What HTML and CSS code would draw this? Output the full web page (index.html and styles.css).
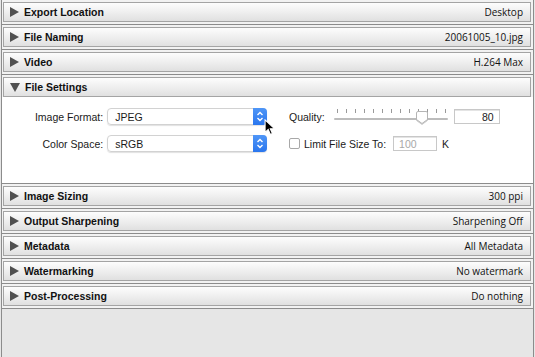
FILE: index.html
```html
<!DOCTYPE html>
<html lang="en">
<head>
    <meta charset="UTF-8">
    <title>Export</title>
    <link rel="stylesheet" href="styles.css">
</head>
<body>
    <div class="panel">
        <div class="section">
            <div class="head"><span class="tri"></span><b>Export Location</b><span class="val">Desktop</span></div>
        </div>
        <div class="section">
            <div class="head"><span class="tri"></span><b>File Naming</b><span class="val">20061005_10.jpg</span></div>
        </div>
        <div class="section">
            <div class="head"><span class="tri"></span><b>Video</b><span class="val">H.264 Max</span></div>
        </div>
        <div class="section">
            <div class="head"><span class="tri open"></span><b>File Settings</b><span class="val"></span></div>
            <div class="body">
                <div class="col left">
                    <div class="row">
                        <label class="lbl">Image Format:</label>
                        <div class="select"><span>JPEG</span><i class="step"><svg width="8" height="11" viewBox="0 0 8 11"><path d="M1.5 4L4 1.5L6.5 4M1.5 7L4 9.5L6.5 7" fill="none" stroke="#fff" stroke-width="1.4"/></svg></i></div>
                    </div>
                    <div class="row">
                        <label class="lbl">Color Space:</label>
                        <div class="select"><span>sRGB</span><i class="step"><svg width="8" height="11" viewBox="0 0 8 11"><path d="M1.5 4L4 1.5L6.5 4M1.5 7L4 9.5L6.5 7" fill="none" stroke="#fff" stroke-width="1.4"/></svg></i></div>
                    </div>
                </div>
                <div class="col right">
                    <div class="row">
                        <label>Quality:</label>
                        <div class="slider">
                            <div class="ticks">
                                <i></i><i></i><i></i><i></i><i></i><i></i><i></i><i></i><i></i><i></i><i></i><i></i><i></i>
                            </div>
                            <div class="track"></div>
                            <svg class="thumb" width="12" height="15" viewBox="0 0 12 15"><path d="M2 1.5h8a1.5 1.5 0 0 1 1.5 1.5v6.5L6 13.5L.5 9.5V3A1.5 1.5 0 0 1 2 1.5z" fill="#fff" stroke="#b5b5b5"/></svg>
                        </div>
                        <div class="field num">80</div>
                    </div>
                    <div class="row">
                        <span class="check"></span>
                        <label>Limit File Size To:</label>
                        <div class="field off">100</div>
                        <label>K</label>
                    </div>
                </div>
                <svg class="cursor" width="12" height="17" viewBox="0 0 13 19"><path d="M1 1v14l3.5-3.3 2.4 5.6 2.3-1-2.4-5.5H11.5z" fill="#000" stroke="#fff" stroke-width="1.2"/></svg>
            </div>
        </div>
        <div class="section">
            <div class="head"><span class="tri"></span><b>Image Sizing</b><span class="val">300 ppi</span></div>
        </div>
        <div class="section">
            <div class="head"><span class="tri"></span><b>Output Sharpening</b><span class="val">Sharpening Off</span></div>
        </div>
        <div class="section">
            <div class="head"><span class="tri"></span><b>Metadata</b><span class="val">All Metadata</span></div>
        </div>
        <div class="section">
            <div class="head"><span class="tri"></span><b>Watermarking</b><span class="val">No watermark</span></div>
        </div>
        <div class="section">
            <div class="head"><span class="tri"></span><b>Post-Processing</b><span class="val">Do nothing</span></div>
        </div>
        <div class="rest"></div>
    </div>
</body>
</html>
```
FILE: styles.css
```css
*{
    margin: 0;
    padding: 0;
    box-sizing: border-box;
}
html,body{
    width: 535px;
    height: 357px;
    overflow: hidden;
}
body{
    background: #e6e6e6;
    font-family: "Liberation Sans", Arial, sans-serif;
    color: #1a1a1a;
}
.panel{
    margin: 0 1px 0 1px;
    height: 357px;
    border-left: 1px solid #8c8c8c;
    border-right: 1px solid #8c8c8c;
    display: flex;
    flex-direction: column;
}
.section{
    padding: 2px 2px 2px 1px;
    border-bottom: 1px solid #8c8c8c;
    background: #f2f2f2;
}
.head{
    height: 20px;
    display: flex;
    align-items: center;
    border: 1px solid #a4a4a4;
    background: linear-gradient(#fdfdfd, #ececec 60%, #e0e0e0);
    padding: 0 7px 0 6px;
}
.head b{
    font-size: 10.5px;
    font-weight: bold;
    color: #111;
    margin-left: 5px;
}
.tri{
    width: 0;
    height: 0;
    border-top: 5px solid transparent;
    border-bottom: 5px solid transparent;
    border-left: 9px solid #505050;
}
.tri.open{
    border-left: 5px solid transparent;
    border-right: 5px solid transparent;
    border-top: 9px solid #505050;
    border-bottom: 0;
}
.val{
    margin-left: auto;
    font-family: "Open Sans", sans-serif;
    font-size: 10px;
    color: #111;
}
.body{
    position: relative;
    margin: 0 -2px -2px -1px;
    height: 86px;
    background: #fff;
    display: flex;
    padding-top: 11px;
    font-size: 10.5px;
}
.col{
    display: flex;
    flex-direction: column;
    gap: 10px;
}
.row{
    display: flex;
    align-items: center;
    height: 17px;
}
.left{
    width: 265px;
}
.lbl{
    width: 102px;
    text-align: right;
    margin-right: 4px;
}
.select{
    width: 161px;
    height: 17px;
    display: flex;
    align-items: center;
    border: 1px solid #d2d2d2;
    border-radius: 4px;
    box-shadow: 0 1px 1px rgba(0,0,0,0.12);
    padding-left: 7px;
    font-size: 10.5px;
}
.step{
    margin-left: auto;
    width: 14px;
    height: 17px;
    margin-right: -1px;
    background: linear-gradient(#4f96f7, #2a76ee);
    border-radius: 0 4px 4px 0;
    display: flex;
    align-items: center;
    justify-content: center;
}
.right{
    margin-left: 22px;
}
.slider{
    position: relative;
    width: 114px;
    height: 17px;
    margin: 0 6px 0 9px;
}
.ticks{
    position: absolute;
    left: 3px;
    right: 2px;
    top: 1px;
    display: flex;
    justify-content: space-between;
}
.ticks i{
    width: 1px;
    height: 4px;
    background: #9a9a9a;
}
.track{
    position: absolute;
    left: 0;
    right: 0;
    top: 10px;
    height: 2px;
    border-radius: 1px;
    background: #bcbcbc;
}
.thumb{
    position: absolute;
    left: 82px;
    top: 2px;
    filter: drop-shadow(0 1px 0.5px rgba(0,0,0,0.2));
}
.field{
    height: 15px;
    border: 1px solid #c8c8c8;
    box-shadow: inset 0 1px 0 #e4e4e4;
    font-size: 10.5px;
    display: flex;
    align-items: center;
    padding: 0 5px;
}
.num{
    width: 46px;
    justify-content: flex-end;
}
.off{
    width: 44px;
    color: #a8a8a8;
    margin: 0 5px 0 7px;
}
.check{
    width: 11px;
    height: 11px;
    border: 1px solid #a8a8a8;
    border-radius: 2px;
    margin-right: 4px;
    background: #fff;
}
.cursor{
    position: absolute;
    left: 262px;
    top: 22px;
}
.rest{
    flex: 1;
    background: #e6e6e6;
}
```
